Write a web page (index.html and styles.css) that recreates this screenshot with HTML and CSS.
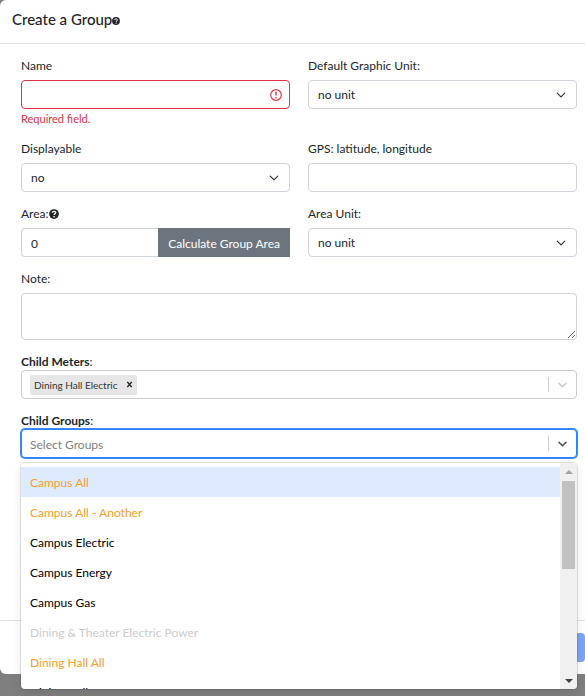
FILE: index.html
```html
<!DOCTYPE html>
<html lang="en">
<head>
<meta charset="utf-8">
<meta name="viewport" content="width=device-width, initial-scale=1">
<title>Create a Group</title>
<link rel="stylesheet" href="styles.css">
</head>
<body>
<svg class="sprite" aria-hidden="true">
  <symbol id="help" viewBox="0 0 16 16">
    <circle cx="8" cy="8" r="7.8" fill="#212529"/>
    <path d="M5.3 6.1C5.4 2.8 10.9 2.9 10.8 6.1C10.8 7.8 8.1 7.8 8.1 9.7" fill="none" stroke="#fff" stroke-width="2"/>
    <circle cx="8.1" cy="12.2" r="1.3" fill="#fff"/>
  </symbol>
  <symbol id="chevron" viewBox="0 0 16 16">
    <path d="M2 5l6 6 6-6" fill="none" stroke="currentColor" stroke-width="2" stroke-linecap="round" stroke-linejoin="round"/>
  </symbol>
  <symbol id="indicator" viewBox="0 0 20 20">
    <path fill="currentColor" d="M4.516 7.548c0.436-0.446 1.043-0.481 1.576 0l3.908 3.747 3.908-3.747c0.533-0.481 1.141-0.446 1.574 0 0.436 0.445 0.408 1.197 0 1.615-0.406 0.418-4.695 4.502-4.695 4.502-0.217 0.223-0.502 0.335-0.787 0.335s-0.57-0.112-0.789-0.335c0 0-4.287-4.084-4.695-4.502s-0.436-1.17 0-1.615z"/>
  </symbol>
</svg>
<form class="modal">
  <header class="modal-header">
    <h1>Create a Group</h1>
    <svg class="help-small"><use href="#help"/></svg>
  </header>
  <div class="modal-body">
    <div class="row">
      <div class="field">
        <label for="name">Name</label>
        <div class="control">
          <input id="name" class="invalid" type="text">
          <svg class="alert" viewBox="0 0 12 12"><circle cx="6" cy="6" r="5.3" fill="none" stroke="#dc3545" stroke-width="1.2"/><path d="M5.1 2.7h1.8L6.5 6.8h-1z" fill="#dc3545"/><circle cx="6" cy="8.6" r=".8" fill="#dc3545"/></svg>
        </div>
        <p class="feedback">Required field.</p>
      </div>
      <div class="field">
        <label for="graphic-unit">Default Graphic Unit:</label>
        <div class="control">
          <select id="graphic-unit"><option>no unit</option></select>
          <svg class="chevron"><use href="#chevron"/></svg>
        </div>
      </div>
    </div>
    <div class="row">
      <div class="field">
        <label for="displayable">Displayable</label>
        <div class="control">
          <select id="displayable"><option>no</option></select>
          <svg class="chevron"><use href="#chevron"/></svg>
        </div>
      </div>
      <div class="field">
        <label for="gps">GPS: latitude, longitude</label>
        <input id="gps" type="text">
      </div>
    </div>
    <div class="row">
      <div class="field">
        <div class="label-line"><label for="area">Area:</label><svg class="help"><use href="#help"/></svg></div>
        <div class="input-group">
          <input id="area" type="text" value="0">
          <button type="button" class="calculate">Calculate Group Area</button>
        </div>
      </div>
      <div class="field">
        <label for="area-unit">Area Unit:</label>
        <div class="control">
          <select id="area-unit"><option>no unit</option></select>
          <svg class="chevron"><use href="#chevron"/></svg>
        </div>
      </div>
    </div>
    <div class="field">
      <label for="note">Note:</label>
      <textarea id="note"></textarea>
    </div>
    <div class="picker">
      <label for="meters"><b>Child Meters</b>:</label>
      <div class="picker-box">
        <span class="tag">Dining Hall Electric<button type="button" aria-label="Remove"><svg viewBox="0 0 8 8"><path d="M1.5 1l5 6M6.5 1l-5 6" stroke="#212529" stroke-width="1.7"/></svg></button></span>
        <input id="meters" type="text">
        <svg class="indicator"><use href="#indicator"/></svg>
      </div>
    </div>
    <div class="picker">
      <label for="groups"><b>Child Groups</b>:</label>
      <div class="picker-box open">
        <input id="groups" type="text" placeholder="Select Groups">
        <svg class="indicator"><use href="#indicator"/></svg>
      </div>
      <div class="menu">
        <ul class="options">
          <li class="active warn">Campus All</li>
          <li class="warn">Campus All - Another</li>
          <li>Campus Electric</li>
          <li>Campus Energy</li>
          <li>Campus Gas</li>
          <li class="disabled">Dining &amp; Theater Electric Power</li>
          <li class="warn">Dining Hall All</li>
          <li>Dining Hall Energy</li>
        </ul>
        <div class="scrollbar">
          <svg viewBox="0 0 8 4" class="up"><path d="M0 4l4-4 4 4z"/></svg>
          <span class="thumb"></span>
          <svg viewBox="0 0 8 4" class="down"><path d="M0 0l4 4 4-4z"/></svg>
        </div>
      </div>
    </div>
  </div>
  <footer class="modal-footer">
    <button type="submit" class="save" disabled>Save</button>
  </footer>
</form>
</body>
</html>
```
FILE: styles.css
```css
* { box-sizing: border-box; }
body {
  margin: 0;
  min-height: 100vh;
  overflow: hidden;
  background: #7f7f7f;
  color: #212529;
  font: 12px/18px Lato, "Open Sans", sans-serif;
}
.sprite { display: none; }
.modal { background: #fff; border-radius: 6px 0 0 6px; }
.modal-header {
  display: flex;
  align-items: center;
  height: 44px;
  padding: 0 12px 5px;
  border-bottom: 1px solid #dee2e6;
}
h1 { margin: 0; font-size: 15px; font-weight: 500; }
.help-small { width: 8px; height: 8px; margin-top: 4px; }
.help { width: 10px; height: 10px; }
.modal-body { padding: 13px 8px 162px 21px; }
.row {
  display: grid;
  grid-template-columns: 1fr 1fr;
  column-gap: 18px;
  margin-bottom: 13px;
}
.field { display: flex; flex-direction: column; min-width: 0; }
.field > label, .label-line { margin-bottom: 5px; }
.label-line { display: flex; align-items: center; }
input, select, textarea, button { font: inherit; color: inherit; margin: 0; }
.field input, select, textarea {
  width: 100%;
  min-width: 0;
  height: 29px;
  padding: 1px 9px 0;
  border: 1px solid #ced4da;
  border-radius: 4px;
  background: #fff;
  appearance: none;
}
.field textarea { height: 47px; resize: vertical; display: block; }
.field .invalid { border-color: #dc3545; }
.control { display: grid; align-items: center; }
.control > * { grid-area: 1 / 1; }
.control svg { justify-self: end; pointer-events: none; }
.chevron { width: 10px; height: 10px; margin-right: 11px; color: #343a40; }
.alert { width: 12px; height: 12px; margin-right: 8px; }
.feedback { margin: 2px 0 0; color: #dc3545; font-size: 11px; line-height: 16px; }
.input-group { display: flex; }
.field .input-group input { flex: 1; border-right: 0; border-radius: 4px 0 0 4px; }
.calculate { padding: 2px 10px 0; border: 0; background: #6c757d; color: #fff; white-space: nowrap; }
.picker { position: relative; margin-top: 14px; }
.picker > label { display: block; line-height: 16px; }
.picker b { font-weight: 700; }
.picker-box {
  display: flex;
  align-items: center;
  height: 29px;
  padding-left: 8px;
  border: 1px solid #ccc;
  border-radius: 4px;
  background: #fff;
  color: #ccc;
}
.picker-box.open { border-color: #2684ff; box-shadow: 0 0 0 1px #4287f5; color: #555; }
.picker-box input { flex: 1; min-width: 0; padding: 2px 0 0; border: 0; outline: 0; background: none; }
.picker-box input::placeholder { color: #808080; opacity: 1; }
.indicator { width: 28px; height: 15px; padding: 0 6px; border-left: 1px solid #ccc; }
.tag {
  display: flex;
  align-items: center;
  height: 20px;
  padding-left: 4px;
  border-radius: 2px;
  background: #e6e6e6;
  color: #333;
  font-size: 10px;
}
.tag button { display: flex; padding: 0 4px; border: 0; background: none; margin-left: 4px; }
.tag svg { width: 7px; height: 7px; }
.menu {
  position: absolute;
  top: calc(100% + 5px);
  left: 0;
  right: 0;
  z-index: 1;
  display: flex;
  height: 226px;
  overflow: hidden;
  border-radius: 4px;
  background: #fff;
  box-shadow: 0 0 0 1px rgba(0, 0, 0, .1), 0 4px 11px rgba(0, 0, 0, .1);
}
.options { flex: 1; margin: 0; padding: 4px 0; list-style: none; color: #000; }
.options li { padding: 7px 9px 5px; }
.options .active { background: #deebff; }
.options .warn { color: #f5a02c; }
.options .disabled { color: #ccc; }
.scrollbar {
  display: flex;
  flex-direction: column;
  align-items: center;
  width: 17px;
  padding: 7px 0 6px;
  background: #f0f0f0;
}
.scrollbar svg { width: 8px; height: 4px; }
.up { fill: #a3a3a3; }
.down { fill: #404040; margin-top: auto; }
.thumb { width: 13px; height: 88px; margin-top: 7px; background: #c1c1c1; }
.modal-footer {
  display: flex;
  justify-content: flex-end;
  align-items: center;
  height: 54px;
  border-top: 1px solid #dee2e6;
}
.save { height: 29px; padding: 0 12px; border: 0; border-radius: 4px; background: #79a6fb; color: #fff; }
```
